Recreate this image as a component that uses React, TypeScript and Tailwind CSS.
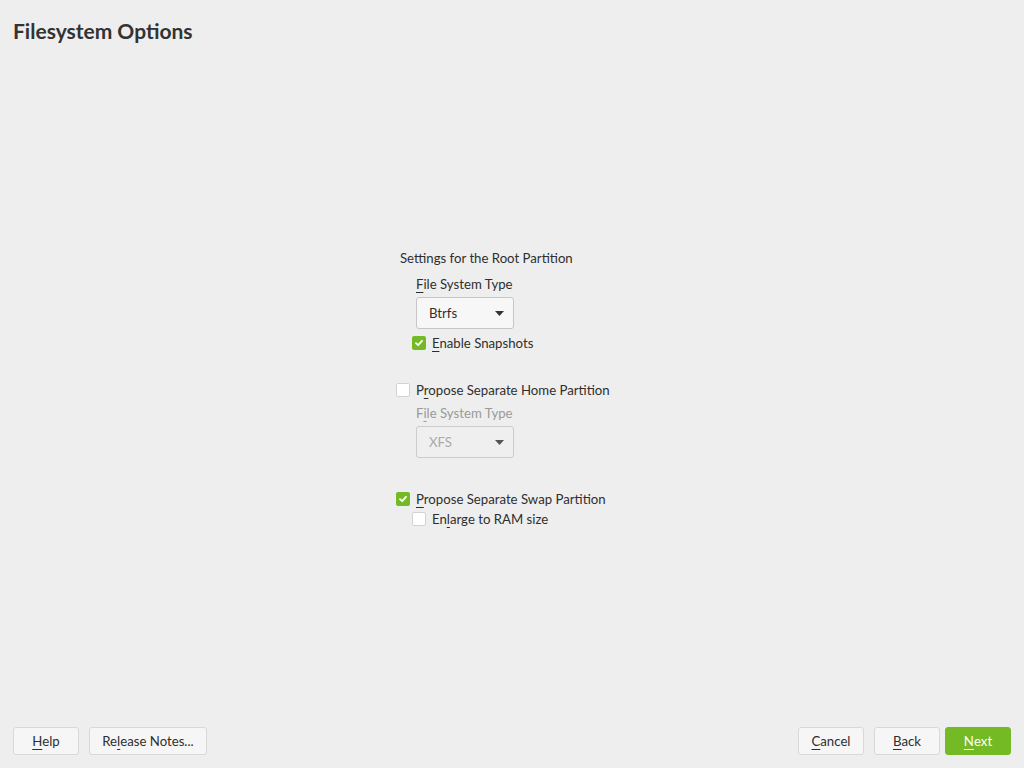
import React from "react";

const font = { fontFamily: "Lato, 'Noto Sans', sans-serif" };

function U({ children }: { children: React.ReactNode }) {
  return <span className="underline underline-offset-[3px] decoration-1">{children}</span>;
}

function Check({ checked }: { checked?: boolean }) {
  return checked ? (
    <span className="w-[14px] h-[14px] rounded-[2px] bg-[#73ba25] flex items-center justify-center shrink-0">
      <svg width="10" height="10" viewBox="0 0 10 10">
        <path d="M2 5.2 L4.2 7.2 L8 2.8" fill="none" stroke="white" strokeWidth="1.8" strokeLinecap="round" strokeLinejoin="round" />
      </svg>
    </span>
  ) : (
    <span className="w-[14px] h-[14px] rounded-[2px] bg-white border border-[#cfd3d8] shrink-0" />
  );
}

function Combo({ value, disabled }: { value: string; disabled?: boolean }) {
  return (
    <div
      className={`w-[98px] h-[32px] rounded-[3px] border flex items-center justify-between pl-[12px] pr-[9px] ${
        disabled ? "border-[#cccccc] bg-[#efefef] text-[#aaaaaa]" : "border-[#c6c6c6] bg-[#f7f7f7] text-[#2e2e2e]"
      }`}
    >
      <span>{value}</span>
      <svg width="9" height="5" viewBox="0 0 9 5">
        <path d="M0 0 H9 L4.5 5 Z" fill={disabled ? "#555" : "#333"} />
      </svg>
    </div>
  );
}

function Btn({ children, w, primary }: { children: React.ReactNode; w: string; primary?: boolean }) {
  return (
    <div
      className={`${w} h-[28px] rounded-[3px] border flex items-center justify-center pt-[1px] ${
        primary ? "bg-[#73ba25] border-[#73ba25] text-white" : "bg-[#f6f6f6] border-[#d8d8d8] text-[#2e2e2e]"
      }`}
    >
      {children}
    </div>
  );
}

export default function App() {
  return (
    <div className="w-[1024px] h-[768px] bg-[#eeeeee] flex flex-col text-[13.2px] text-[#2e2e2e]" style={font}>
      <div className="px-[13px] pt-[18px] text-[21px] leading-[26px] font-bold text-[#333333]">Filesystem Options</div>
      <div className="flex-1 flex items-center justify-center pt-[6px]">
        <div className="w-[232px] flex flex-col leading-[16px]">
          <div className="pl-[4px]">Settings for the Root Partition</div>
          <div className="pl-[20px] mt-[10px]">
            <U>F</U>ile System Type
          </div>
          <div className="pl-[20px] mt-[5px]">
            <Combo value="Btrfs" />
          </div>
          <div className="pl-[16px] mt-[6px] flex items-center gap-[6px]">
            <Check checked />
            <span>
              <U>E</U>nable Snapshots
            </span>
          </div>
          <div className="mt-[31px] flex items-center gap-[6px]">
            <Check />
            <span>
              P<U>r</U>opose Separate Home Partition
            </span>
          </div>
          <div className="pl-[20px] mt-[7px] text-[#9a9a9a]">
            F<U>i</U>le System Type
          </div>
          <div className="pl-[20px] mt-[5px]">
            <Combo value="XFS" disabled />
          </div>
          <div className="mt-[33px] flex items-center gap-[6px]">
            <Check checked />
            <span>
              <U>P</U>ropose Separate Swap Partition
            </span>
          </div>
          <div className="pl-[16px] mt-[4px] flex items-center gap-[6px]">
            <Check />
            <span>
              En<U>l</U>arge to RAM size
            </span>
          </div>
        </div>
      </div>
      <div className="flex items-center px-[13px] pb-[13px] gap-[10px]">
        <Btn w="w-[66px]">
          <U>H</U>elp
        </Btn>
        <Btn w="w-[118px]">
          Re<U>l</U>ease Notes...
        </Btn>
        <div className="flex-1" />
        <Btn w="w-[66px]">
          <U>C</U>ancel
        </Btn>
        <Btn w="w-[66px]">
          <U>B</U>ack
        </Btn>
        <div className="-ml-[5px]">
          <Btn w="w-[66px]" primary>
            <U>N</U>ext
          </Btn>
        </div>
      </div>
    </div>
  );
}
